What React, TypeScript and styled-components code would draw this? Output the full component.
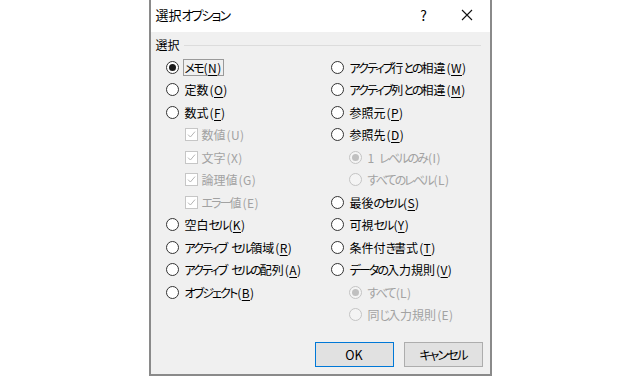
import React from "react";
import styled, { createGlobalStyle } from "styled-components";

const GlobalStyle = createGlobalStyle`
  html, body {
    margin: 0;
    padding: 0;
    background: #fff;
  }
  body {
    font-family: "Noto Sans CJK JP", "Noto Sans", sans-serif;
    font-feature-settings: "palt";
    color: #000;
  }
`;

const Page = styled.div`
  width: 640px;
  height: 377px;
  display: flex;
  justify-content: center;
  align-items: flex-start;
`;

const Dialog = styled.div`
  width: 339px;
  height: 374px;
  border: 2px solid #8a8a8a;
  border-top: none;
  background: #f0f0f0;
  display: flex;
  flex-direction: column;
`;

const TitleBar = styled.div`
  height: 32px;
  background: #fff;
  display: flex;
  align-items: center;
  padding-left: 5px;
`;

const Title = styled.div`
  flex: 1;
  font-size: 13px;
  line-height: 16px;
  padding-bottom: 2px;
`;

const TitleButton = styled.div<{ $w: number }>`
  width: ${(p) => p.$w}px;
  height: 32px;
  display: flex;
  align-items: center;
  justify-content: center;
  font-size: 14px;
  padding-bottom: 2px;
  box-sizing: border-box;
`;

const Body = styled.div`
  flex: 1;
  display: flex;
  flex-direction: column;
  padding: 4px 7px 7px 5px;
`;

const GroupHeader = styled.div`
  display: flex;
  align-items: center;
  gap: 4px;
  height: 16px;
  font-size: 12px;
`;

const GroupLine = styled.div`
  flex: 1;
  height: 1px;
  background: #dcdcdc;
  margin-right: 2px;
  margin-top: 2px;
`;

const Columns = styled.div`
  display: flex;
  padding: 4px 0 0 10px;
`;

const Column = styled.div<{ $w?: number }>`
  display: flex;
  flex-direction: column;
  width: ${(p) => (p.$w ? `${p.$w}px` : "auto")};
`;

const Row = styled.div<{ $indent?: number; $disabled?: boolean }>`
  height: 22.5px;
  display: flex;
  align-items: center;
  padding-left: ${(p) => p.$indent ?? 0}px;
  font-size: 12px;
  color: ${(p) => (p.$disabled ? "#a2a2a2" : "#000")};
  white-space: nowrap;

  u {
    text-decoration-thickness: 1px;
    text-underline-offset: 2px;
  }
`;

const Kana = styled.span`
  letter-spacing: -1.9px;
`;

const Latin = styled.span`
  letter-spacing: 0.4px;
  margin-left: 1px;
`;

const Space = styled.span`
  display: inline-block;
  width: 5px;
`;

const RadioMark = styled.span<{ $checked?: boolean; $disabled?: boolean }>`
  width: 11px;
  height: 11px;
  border-radius: 50%;
  border: 1px solid ${(p) => (p.$disabled ? "#c4c4c4" : "#333")};
  background: ${(p) => (p.$disabled ? "#f4f4f4" : "#fff")};
  display: flex;
  align-items: center;
  justify-content: center;
  margin-right: 6px;
  flex-shrink: 0;

  &::after {
    content: "";
    display: ${(p) => (p.$checked ? "block" : "none")};
    width: 7px;
    height: 7px;
    border-radius: 50%;
    background: ${(p) => (p.$disabled ? "#c0c0c0" : "#1a1a1a")};
  }
`;

const CheckMark = styled.span`
  width: 11px;
  height: 11px;
  border: 1px solid #c6c6c6;
  background: #fff;
  display: flex;
  align-items: center;
  justify-content: center;
  margin-right: 4px;
  flex-shrink: 0;
`;

const Focus = styled.span`
  border: 1px solid #9a9a9a;
  padding: 0 1px;
  margin-left: -2px;
  line-height: 15px;
`;

const Footer = styled.div`
  margin-top: auto;
  display: flex;
  justify-content: flex-end;
  gap: 10px;
`;

const Button = styled.button<{ $default?: boolean }>`
  width: 79px;
  height: 25px;
  box-sizing: border-box;
  border: 1px solid ${(p) => (p.$default ? "#0078d7" : "#adadad")};
  background: #e1e1e1;
  font-family: inherit;
  font-feature-settings: "palt";
  font-size: 12.5px;
  color: #000;
  padding: 0;
`;

// "&X" marks the access key; kana runs are set narrower like Meiryo UI
function Text({ s }: { s: string }) {
  const parts = s.split(/( |[\u3040-\u30ff]+|\([^)]*\))/).filter(Boolean);
  return (
    <>
      {parts.map((p, i) => {
        if (p === " ") return <Space key={i} />;
        if (p.startsWith("(")) {
          const inner = p.slice(1, -1);
          return (
            <Latin key={i}>
              ({inner.startsWith("&") ? <u>{inner.slice(1)}</u> : inner})
            </Latin>
          );
        }
        if (/[\u3040-\u30ff]/.test(p)) return <Kana key={i}>{p}</Kana>;
        return <React.Fragment key={i}>{p}</React.Fragment>;
      })}
    </>
  );
}

type Opt = {
  label: string;
  kind?: "radio" | "check";
  checked?: boolean;
  disabled?: boolean;
  indent?: number;
  focus?: boolean;
};

const left: Opt[] = [
  { label: "メモ(&N)", checked: true, focus: true },
  { label: "定数(&O)" },
  { label: "数式(&F)" },
  { label: "数値(U)", kind: "check", checked: true, disabled: true, indent: 19 },
  { label: "文字(X)", kind: "check", checked: true, disabled: true, indent: 19 },
  { label: "論理値(G)", kind: "check", checked: true, disabled: true, indent: 19 },
  { label: "エラー値(E)", kind: "check", checked: true, disabled: true, indent: 19 },
  { label: "空白セル(&K)" },
  { label: "アクティブ セル領域(&R)" },
  { label: "アクティブ セルの配列(&A)" },
  { label: "オブジェクト(&B)" },
];

const right: Opt[] = [
  { label: "アクティブ行との相違(&W)" },
  { label: "アクティブ列との相違(&M)" },
  { label: "参照元(&P)" },
  { label: "参照先(&D)" },
  { label: "1 レベルのみ(I)", checked: true, disabled: true, indent: 18 },
  { label: "すべてのレベル(L)", disabled: true, indent: 18 },
  { label: "最後のセル(&S)" },
  { label: "可視セル(&Y)" },
  { label: "条件付き書式(&T)" },
  { label: "データの入力規則(&V)" },
  { label: "すべて(L)", checked: true, disabled: true, indent: 18 },
  { label: "同じ入力規則(E)", disabled: true, indent: 18 },
];

function Option({ o }: { o: Opt }) {
  const text = <Text s={o.label} />;
  return (
    <Row $indent={o.indent} $disabled={o.disabled}>
      {o.kind === "check" ? (
        <CheckMark>
          <svg width="9" height="9" viewBox="0 0 9 9">
            <path d="M1 4.6 L3.4 7 L8 1.6" fill="none" stroke="#b4b4b4" strokeWidth="1" />
          </svg>
        </CheckMark>
      ) : (
        <RadioMark $checked={o.checked} $disabled={o.disabled} />
      )}
      {o.focus ? <Focus>{text}</Focus> : <span>{text}</span>}
    </Row>
  );
}

export default function App() {
  return (
    <Page>
      <GlobalStyle />
      <Dialog>
        <TitleBar>
          <Title>
            <Text s="選択オプション" />
          </Title>
          <TitleButton $w={40}>?</TitleButton>
          <TitleButton $w={46}>
            <svg width="12" height="12" viewBox="0 0 12 12">
              <path d="M1 1 L11 11 M11 1 L1 11" stroke="#111" strokeWidth="1.1" />
            </svg>
          </TitleButton>
        </TitleBar>
        <Body>
          <GroupHeader>
            選択
            <GroupLine />
          </GroupHeader>
          <Columns>
            <Column $w={165}>
              {left.map((o, i) => (
                <Option key={i} o={o} />
              ))}
            </Column>
            <Column>
              {right.map((o, i) => (
                <Option key={i} o={o} />
              ))}
            </Column>
          </Columns>
          <Footer>
            <Button $default>OK</Button>
            <Button>
              <Text s="キャンセル" />
            </Button>
          </Footer>
        </Body>
      </Dialog>
    </Page>
  );
}
